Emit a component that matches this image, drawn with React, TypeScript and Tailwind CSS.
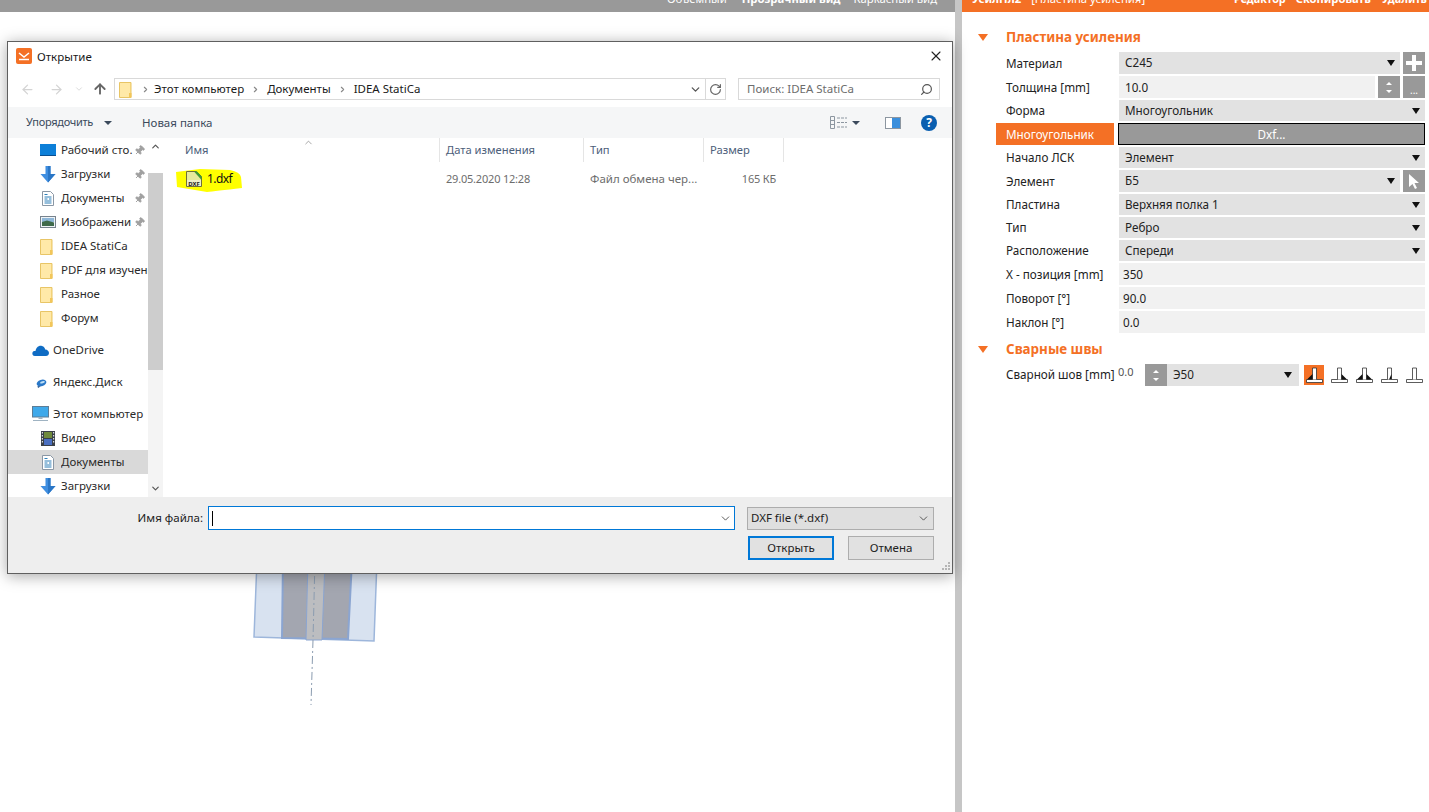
import { ChevronDown, ChevronRight, ChevronUp, X, RotateCw, Search, Pin, ArrowLeft, ArrowRight, ArrowUp } from "lucide-react"

function FolderIcon() {
  return (
    <svg width="13" height="17" viewBox="0 0 13 17" className="shrink-0">
      <path d="M0.500 1.500h11.500v15H0.500z" fill="#fde08a" stroke="#e8c566" />
      <path d="M1 2h10v14H1z" fill="#ffe9a8" />
      <path d="M10 12h2.500v4.500H10z" fill="#f2c65a" />
    </svg>
  )
}

function DownloadIcon() {
  return (
    <svg width="16" height="17" viewBox="0 0 16 17" className="shrink-0">
      <path d="M5.500 0h5v8h5L8 16.500 0.500 8h5z" fill="#3f8ee0" />
      <path d="M8 0h2.500v8h5L8 16.500z" fill="#2a76c6" />
    </svg>
  )
}

function DocIcon() {
  return (
    <svg width="12" height="15" viewBox="0 0 12 15" className="shrink-0 ml-[2px]">
      <path d="M0.500 0.500h8l3 3v11h-11z" fill="#fff" stroke="#8a97a5" />
      <path d="M2.500 3.500h3M2.500 6h7M2.500 8h3M7 8h2.500M2.500 10h7M2.500 12h7" stroke="#2d7fb8" />
    </svg>
  )
}

function NavIcon({ kind }: { kind: string }) {
  if (kind === "desk")
    return (
      <svg width="16" height="12" viewBox="0 0 16 12" className="shrink-0">
        <rect width="16" height="12" fill="#0d7fd8" />
        <path d="M0 11h16v1H0z" fill="#0b4f8f" />
      </svg>
    )
  if (kind === "down") return <DownloadIcon />
  if (kind === "doc") return <DocIcon />
  if (kind === "img")
    return (
      <svg width="16" height="12" viewBox="0 0 16 12" className="shrink-0">
        <rect x="0.500" y="0.500" width="15" height="11" fill="#eef3f7" stroke="#77828d" />
        <path d="M2 2h12v4H2z" fill="#8fb7d8" />
        <path d="M2 6l5-1.500 7 2V10H2z" fill="#3f6a4a" />
      </svg>
    )
  if (kind === "video")
    return (
      <svg width="14" height="15" viewBox="0 0 14 15" className="shrink-0 ml-[1px]">
        <rect width="14" height="15" fill="#3a4048" />
        <rect x="3" y="1" width="8" height="6" fill="#6f8a3c" />
        <rect x="3" y="8" width="8" height="6" fill="#4a6fc0" />
        <path d="M0.800 1h1.200v1.500H0.800zM0.800 4h1.200v1.500H0.800zM0.800 7h1.200v1.500H0.800zM0.800 10h1.200v1.500H0.800zM12 1h1.200v1.500H12zM12 4h1.200v1.500H12zM12 7h1.200v1.500H12zM12 10h1.200v1.500H12z" fill="#d9dde2" />
      </svg>
    )
  if (kind === "cloud")
    return (
      <svg width="17" height="11" viewBox="0 0 17 11" className="shrink-0">
        <path d="M3 11C0.500 11 0 9 0.500 7.500 1 6 2.500 5.800 3.500 6 4 2.500 7 0 10 1c2 .6 3 2 3.200 3.500C15.500 4.500 17 6.500 17 8c0 2-1.500 3-3 3z" fill="#0f6cc4" />
      </svg>
    )
  if (kind === "yadisk")
    return (
      <svg width="17" height="11" viewBox="0 0 17 11" className="shrink-0">
        <ellipse cx="9.500" cy="6" rx="5" ry="3.200" fill="#2a78c8" transform="rotate(-18 9.500 6)" />
        <ellipse cx="10.500" cy="5.200" rx="2.500" ry="1" fill="#bfe0f5" transform="rotate(-18 10.500 5.200)" />
        <path d="M5.500 9l3 .5-2.500 1.500z" fill="#1d4f8a" />
      </svg>
    )
  if (kind === "pc")
    return (
      <svg width="17" height="16" viewBox="0 0 17 16" className="shrink-0">
        <rect x="0.500" y="0.500" width="16" height="10.500" fill="#3fa9ea" stroke="#5d7d96" />
        <path d="M6.500 11h4v2h-4z" fill="#9fb3c2" />
        <path d="M1 14h15v1H1z" fill="#9fb3c2" />
      </svg>
    )
  return <FolderIcon />
}

function NavRow({
  label,
  kind,
  pin,
  top,
  active,
}: {
  label: string
  kind: string
  pin?: boolean
  top?: boolean
  active?: boolean
}) {
  return (
    <div
      className={`flex h-6 items-center shrink-0 ${top ? "pl-[24px] mt-2" : "pl-[32px]"} ${active ? "bg-[#d9d9d9]" : ""}`}
    >
      <div className="flex items-center w-[21px] shrink-0">
        <NavIcon kind={kind} />
      </div>
      <span className="whitespace-nowrap overflow-hidden flex-1 text-[#2b2b2b]">{label}</span>
      {pin && <Pin size={11} fill="#a0a0a0" className="text-[#a0a0a0] mr-[3px] ml-[1px] rotate-45 shrink-0" />}
    </div>
  )
}

function WeldIcon({ kind, active }: { kind: string; active?: boolean }) {
  return (
    <div className={`w-[20px] h-[20px] flex items-center justify-center ${active ? "bg-[#f47025]" : ""}`}>
      <svg width="17" height="17" viewBox="0 0 17 17">
        <path d="M0.500 12.500h16v3h-16z" fill="#fff" stroke="#333" strokeWidth="0.800" />
        <path d="M6.500 12.500V1h4v11.500" fill="#fff" stroke="#333" strokeWidth="0.800" />
        {(kind === "left" || kind === "both") && <path d="M6.500 7v5.500H1z" fill="#111" />}
        {(kind === "right" || kind === "both") && <path d="M10.500 7v5.500H16z" fill="#111" />}
        {kind === "slim" && <path d="M10.500 7v5.500H8z" fill="#111" />}
      </svg>
    </div>
  )
}

function Caret() {
  return <div className="w-0 h-0 border-l-[4px] border-r-[4px] border-t-[6px] border-l-transparent border-r-transparent border-t-[#111]" />
}

function Row({
  label,
  children,
  h = "h-[22px]",
  low,
}: {
  label: string
  children: React.ReactNode
  h?: string
  low?: boolean
}) {
  return (
    <div className={`flex items-center pl-[44px] pr-[4px] mb-[2px] ${h}`}>
      <div className={`w-[113px] shrink-0 whitespace-nowrap text-[#222] ${low ? "mt-[2px]" : ""}`}>{label}</div>
      <div className="flex-1 flex h-full gap-[3px] min-w-0">{children}</div>
    </div>
  )
}

function Select({ value }: { value: string }) {
  return (
    <div className="flex-1 bg-[#e2e2e2] flex items-center justify-between pl-[6px] pr-[5px] text-[#222]">
      <span>{value}</span>
      <Caret />
    </div>
  )
}

function Field({ value, wide }: { value: string; wide?: boolean }) {
  return <div className={`flex-1 bg-[#f1f1f1] flex items-center pt-[2px] text-[#222] ${wide ? "pl-[6px]" : "pl-[4px]"}`}>{value}</div>
}

function Spinner() {
  return (
    <div className="w-[22px] bg-[#999999] flex flex-col items-center justify-center gap-[5px] shrink-0">
      <div className="w-0 h-0 border-l-[3px] border-r-[3px] border-b-[3px] border-l-transparent border-r-transparent border-b-white" />
      <div className="w-0 h-0 border-l-[3px] border-r-[3px] border-t-[3px] border-l-transparent border-r-transparent border-t-white" />
    </div>
  )
}

function SectionHead({ title }: { title: string }) {
  return (
    <div className="flex items-center h-[20px] pl-[16px] text-[#f47025] font-bold text-[13.4px]">
      <div className="w-0 h-0 border-l-[5px] border-r-[5px] border-t-[7px] border-l-transparent border-r-transparent border-t-[#f47025] mr-[18px]" />
      {title}
    </div>
  )
}

export default function App() {
  return (
    <div className="relative flex h-screen w-full overflow-hidden bg-white text-[11.7px] font-['Noto_Sans','Open_Sans',sans-serif]">
      {/* canvas */}
      <div className="w-[955px] shrink-0 flex flex-col">
        <div className="h-3 bg-[#999999] overflow-hidden flex justify-end text-white text-[11.3px] pr-[18px] whitespace-nowrap">
          <span className="-mt-[9px]">Объемный</span>
          <span className="-mt-[9px] ml-[15px] font-bold">Прозрачный вид</span>
          <span className="-mt-[9px] ml-[13px]">Каркасный вид</span>
        </div>
      </div>
      <div className="w-[7px] shrink-0 bg-[#c6c6c6]" />

      {/* properties */}
      <div className="flex-1 flex flex-col min-w-0">
        <div className="h-3 bg-[#f47025] overflow-hidden flex text-white text-[11.3px] pl-[10px] pr-[2px] whitespace-nowrap">
          <span className="-mt-[9px] font-bold">УсилПл2</span>
          <span className="-mt-[9px] ml-[10px]">[Пластина усиления]</span>
          <span className="-mt-[9px] ml-auto font-bold text-[10.8px]">Редактор</span>
          <span className="-mt-[9px] ml-[10px] font-bold text-[11.2px]">Скопировать</span>
          <span className="-mt-[9px] ml-[11px] font-bold text-[10.8px]">Удалить</span>
        </div>
        <div className="mt-[15px] mb-[5px]">
          <SectionHead title="Пластина усиления" />
        </div>
        <Row label="Материал" low>
          <Select value="С245" />
          <div className="w-[22px] bg-[#999999] flex items-center justify-center shrink-0">
            <svg width="16" height="16" viewBox="0 0 16 16"><path d="M6 0h4v6h6v4h-6v6H6v-6H0V6h6z" fill="#fff" /></svg>
          </div>
        </Row>
        <Row label="Толщина [mm]" low>
          <Field value="10.0" wide />
          <Spinner />
          <div className="w-[22px] bg-[#999999] flex items-end justify-center text-white text-[10px] leading-[16px] shrink-0">...</div>
        </Row>
        <Row label="Форма" h="h-[21px]">
          <Select value="Многоугольник" />
        </Row>
        <div className="flex h-[22px] mb-[2px] pl-[34px] pr-[4px]">
          <div className="w-[118px] bg-[#f47025] text-white flex items-center pl-[10px] pt-[2px] whitespace-nowrap">Многоугольник</div>
          <div className="flex-1 ml-[4px] bg-[#999999] border border-black text-white flex items-center justify-center pt-[1px]">Dxf...</div>
        </div>
        <Row label="Начало ЛСК" h="h-[21px]">
          <Select value="Элемент" />
        </Row>
        <Row label="Элемент" low>
          <Select value="Б5" />
          <div className="w-[22px] bg-[#999999] flex items-center justify-center shrink-0">
            <svg width="12" height="16" viewBox="0 0 12 16"><path d="M1 1v13l3.500-3 2.500 5 2-1-2.500-5H11z" fill="#fff" /></svg>
          </div>
        </Row>
        <Row label="Пластина" h="h-[21px]">
          <Select value="Верхняя полка 1" />
        </Row>
        <Row label="Тип" h="h-[21px]">
          <Select value="Ребро" />
        </Row>
        <Row label="Расположение" h="h-[21px]">
          <Select value="Спереди" />
        </Row>
        <Row label="X - позиция [mm]" low>
          <Field value="350" />
        </Row>
        <Row label="Поворот [°]" low>
          <Field value="90.0" />
        </Row>
        <Row label="Наклон [°]" low>
          <Field value="0.0" />
        </Row>
        <div className="mt-[4px] mb-[5px]">
          <SectionHead title="Сварные швы" />
        </div>
        <div className="flex items-center h-[22px] pl-[44px] pr-[4px]">
          <div className="w-[112px] shrink-0 whitespace-nowrap text-[#222]">Сварной шов [mm]</div>
          <div className="w-[27px] text-[#555] text-[11px] -mt-[6px]">0.0</div>
          <div className="flex h-full w-[154px]">
            <Spinner />
            <div className="flex-1 bg-[#e2e2e2] flex items-center justify-between pl-[6px] pr-[7px] text-[#222]">
              <span>Э50</span>
              <Caret />
            </div>
          </div>
          <div className="flex items-center ml-[5px] gap-[5px]">
            <WeldIcon kind="left" active />
            <WeldIcon kind="right" />
            <WeldIcon kind="both" />
            <WeldIcon kind="slim" />
            <WeldIcon kind="none" />
          </div>
        </div>
      </div>

      {/* model behind the dialog */}
      <svg className="absolute left-[240px] top-[560px]" width="150" height="150" viewBox="0 0 150 150">
        <path d="M17 0h120l-3 81-120-4z" fill="#d8e2f0" stroke="#9db6db" strokeWidth="1.500" />
        <path d="M43 0h69l-4 79-66-1z" fill="#a3a6b0" stroke="#8ba5d1" strokeWidth="2" />
        <path d="M68 0h17l-3 80H66z" fill="#bcbdc0" stroke="#8ba5d1" />
        <path d="M75 0l-2 80-2 65" fill="none" stroke="#8b9cb0" strokeDasharray="8 3 2 3" />
      </svg>

      {/* file dialog */}
      <div className="absolute left-[7px] top-[41px] w-[946px] h-[533px] bg-white border border-[#5f5f5f] shadow-[0_2px_14px_rgba(0,0,0,0.35)] flex flex-col text-[11.5px] text-[#1a1a1a]">
        <div className="h-[36px] shrink-0 flex items-start pt-[6px] pl-[8px] pr-[8px]">
          <svg width="16" height="16" viewBox="0 0 16 16" className="shrink-0">
            <rect width="16" height="16" rx="2" fill="#f47025" />
            <path d="M3 5l5 4 5-4" fill="none" stroke="#fff" strokeWidth="1.500" />
            <path d="M3 11.500h10" stroke="#fff" strokeWidth="1.500" />
          </svg>
          <span className="ml-[5px] leading-[16px] mt-[1px]">Открытие</span>
          <X size={16} strokeWidth={1.6} className="ml-auto text-[#222]" />
        </div>

        <div className="h-[29px] shrink-0 flex items-start">
          <div className="flex items-center h-[22px] w-[106px] shrink-0 pl-[12px]">
            <ArrowLeft size={15} strokeWidth={2} className="text-[#d4d4d4]" />
            <ArrowRight size={15} strokeWidth={2} className="text-[#d4d4d4] ml-[14px]" />
            <ChevronDown size={10} strokeWidth={2} className="text-[#d4d4d4] ml-[10px]" />
            <ArrowUp size={16} strokeWidth={2.8} className="text-[#666] ml-[8px]" />
          </div>
          <div className="flex items-center w-[612px] h-[22px] border border-[#d9d9d9] shrink-0">
            <div className="ml-[4px] mr-[5px]"><FolderIcon /></div>
            <div className="w-[17px] flex justify-center"><ChevronRight size={9} strokeWidth={3} className="text-[#888]" /></div>
            <span>Этот компьютер</span>
            <div className="w-[23px] flex justify-center"><ChevronRight size={9} strokeWidth={3} className="text-[#888]" /></div>
            <span>Документы</span>
            <div className="w-[23px] flex justify-center"><ChevronRight size={9} strokeWidth={3} className="text-[#888]" /></div>
            <span>IDEA StatiCa</span>
            <ChevronDown size={13} strokeWidth={2.4} className="ml-auto mr-[3px] text-[#555]" />
            <div className="w-[20px] h-full border-l border-[#d9d9d9] flex items-center justify-center">
              <RotateCw size={13} strokeWidth={2.2} className="text-[#666]" />
            </div>
          </div>
          <div className="flex items-center w-[202px] h-[22px] ml-[12px] border border-[#d9d9d9] pl-[8px] pr-[6px] text-[#6d6d6d] shrink-0">
            Поиск: IDEA StatiCa
            <Search size={13} strokeWidth={2.2} className="ml-auto -scale-x-100 text-[#555]" />
          </div>
        </div>

        <div className="h-[31px] shrink-0 bg-[#f5f6f7] flex items-center pl-[18px] text-[#3b4a5c]">
          <span className="w-[78px] text-[11px] tracking-[-0.3px] whitespace-nowrap">Упорядочить</span>
          <div className="w-0 h-0 border-l-[4px] border-r-[4px] border-t-[4px] border-l-transparent border-r-transparent border-t-[#3b4a5c]" />
          <span className="ml-[30px]">Новая папка</span>
          <svg width="17" height="13" viewBox="0 0 17 13" className="ml-auto">
            <path d="M0.500 0.500h4v12h-4zM0.500 4.500h4M0.500 8.500h4" fill="none" stroke="#8c96a0" />
            <path d="M7 2h10M7 6.500h10M7 11h10" stroke="#8c96a0" strokeDasharray="3 1" />
          </svg>
          <div className="ml-[5px] w-0 h-0 border-l-[4px] border-r-[4px] border-t-[4px] border-l-transparent border-r-transparent border-t-[#3b4a5c]" />
          <svg width="16" height="12" viewBox="0 0 16 12" className="ml-[25px]">
            <rect x="0.500" y="0.500" width="15" height="11" fill="#fff" stroke="#8c96a0" />
            <rect x="7" y="1" width="8" height="10" fill="#3b8fdc" />
          </svg>
          <div className="ml-[20px] mr-[15px] w-4 h-4 rounded-full bg-[#0a5fb0] text-white font-bold text-[12px] leading-4 text-center">?</div>
        </div>

        <div className="flex-1 flex min-h-0">
          <div className="w-[140px] shrink-0 flex flex-col overflow-hidden">
            <NavRow label="Рабочий сто." kind="desk" pin />
            <NavRow label="Загрузки" kind="down" pin />
            <NavRow label="Документы" kind="doc" pin />
            <NavRow label="Изображени" kind="img" pin />
            <NavRow label="IDEA StatiCa" kind="folder" />
            <NavRow label="PDF для изучения" kind="folder" />
            <NavRow label="Разное" kind="folder" />
            <NavRow label="Форум" kind="folder" />
            <NavRow label="OneDrive" kind="cloud" top />
            <NavRow label="Яндекс.Диск" kind="yadisk" top />
            <NavRow label="Этот компьютер" kind="pc" top />
            <NavRow label="Видео" kind="video" />
            <NavRow label="Документы" kind="doc" active />
            <NavRow label="Загрузки" kind="down" />
          </div>
          <div className="w-[15px] shrink-0 bg-[#f4f4f4] flex flex-col items-center">
            <div className="h-[35px] w-full pt-[3px] flex justify-center bg-white">
              <ChevronUp size={11} strokeWidth={2.6} className="text-[#555]" />
            </div>
            <div className="h-[197px] w-full bg-[#cdcdcd]" />
            <div className="flex-1" />
            <ChevronDown size={11} strokeWidth={2.6} className="text-[#555] mb-[3px]" />
          </div>

          <div className="flex-1 relative flex flex-col">
            <div className="absolute left-[140px] -top-[1px] text-[#777]">
              <ChevronUp size={11} strokeWidth={1.4} />
            </div>
            <div className="flex h-6 text-[#4c607a] shrink-0 text-[11.2px]">
              <div className="w-[277px] pl-[22px] pt-[1px] border-r border-[#e5e5e5] flex items-center">Имя</div>
              <div className="w-[144px] pl-[6px] pt-[1px] border-r border-[#e5e5e5] flex items-center">Дата изменения</div>
              <div className="w-[120px] pl-[6px] pt-[1px] border-r border-[#e5e5e5] flex items-center">Тип</div>
              <div className="w-[80px] pl-[6px] pt-[1px] border-r border-[#e5e5e5] flex items-center">Размер</div>
            </div>
            <div className="flex h-[22px] mt-[6px] text-[#6d6d6d] items-center">
              <div className="w-[277px] pl-[23px] flex items-center relative">
                {/* marker highlight */}
                <svg width="68" height="24" viewBox="0 0 68 24" className="absolute left-[12px] -top-[1px]">
                  <path d="M1 3L25 0l30 1q10 2 11 7l1 11q-27 3-35 4L2 18z" fill="#ffff00" />
                </svg>
                <svg width="16" height="16" viewBox="0 0 16 16" className="relative shrink-0">
                  <path d="M0.500 0.500h10l5 5v10h-15z" fill="#e7ea9c" stroke="#6f6f3a" />
                  <path d="M8 0.500h3l4.500 5V9z" fill="#3f9a34" />
                  <rect x="1" y="9" width="14" height="6" fill="#eeeecb" />
                  <text x="8" y="14.500" textAnchor="middle" fontSize="6" fontWeight="bold" fill="#222">DXF</text>
                </svg>
                <span className="relative ml-[5px] text-[#111] text-[12px] tracking-[-0.6px]">1.dxf</span>
              </div>
              <div className="w-[144px] pl-[6px] text-[11px] tracking-[-0.2px]">29.05.2020 12:28</div>
              <div className="w-[120px] pl-[6px] whitespace-nowrap">Файл обмена чер...</div>
              <div className="w-[72px] text-right text-[11px] tracking-[-0.2px]">165 КБ</div>
            </div>
          </div>
        </div>

        <div className="h-[76px] shrink-0 bg-[#eeeeee] relative pt-[9px] pr-[18px]">
          <div className="flex items-center h-[24px]">
            <div className="w-[195px] text-right shrink-0 text-[#222]">Имя файла:</div>
            <div className="ml-[5px] w-[527px] h-[24px] bg-white border border-[#0078d7] flex items-center pl-[3px] pr-[2px]">
              <div className="w-px h-[15px] bg-black" />
              <ChevronDown size={13} strokeWidth={1.6} className="ml-auto text-[#444]" />
            </div>
            <div className="ml-[12px] w-[187px] h-[23px] bg-[#dfdfdf] border border-[#adadad] flex items-center pl-[3px] pr-[3px] text-[#222]">
              DXF file (*.dxf)
              <ChevronDown size={13} strokeWidth={1.6} className="ml-auto text-[#444]" />
            </div>
          </div>
          <div className="flex justify-end mt-[6px] gap-[14px]">
            <div className="w-[86px] h-[24px] bg-[#e1e1e1] border-2 border-[#0078d7] flex items-center justify-center text-[#222]">Открыть</div>
            <div className="w-[86px] h-[24px] bg-[#e1e1e1] border border-[#adadad] flex items-center justify-center text-[#222]">Отмена</div>
          </div>
          <svg width="9" height="9" viewBox="0 0 9 9" className="absolute right-[2px] bottom-[2px]">
            <path d="M7 0h2v2H7zM4 3h2v2H4zM7 3h2v2H7zM1 6h2v2H1zM4 6h2v2H4zM7 6h2v2H7z" fill="#b5b5b5" />
          </svg>
        </div>
      </div>
    </div>
  )
}
